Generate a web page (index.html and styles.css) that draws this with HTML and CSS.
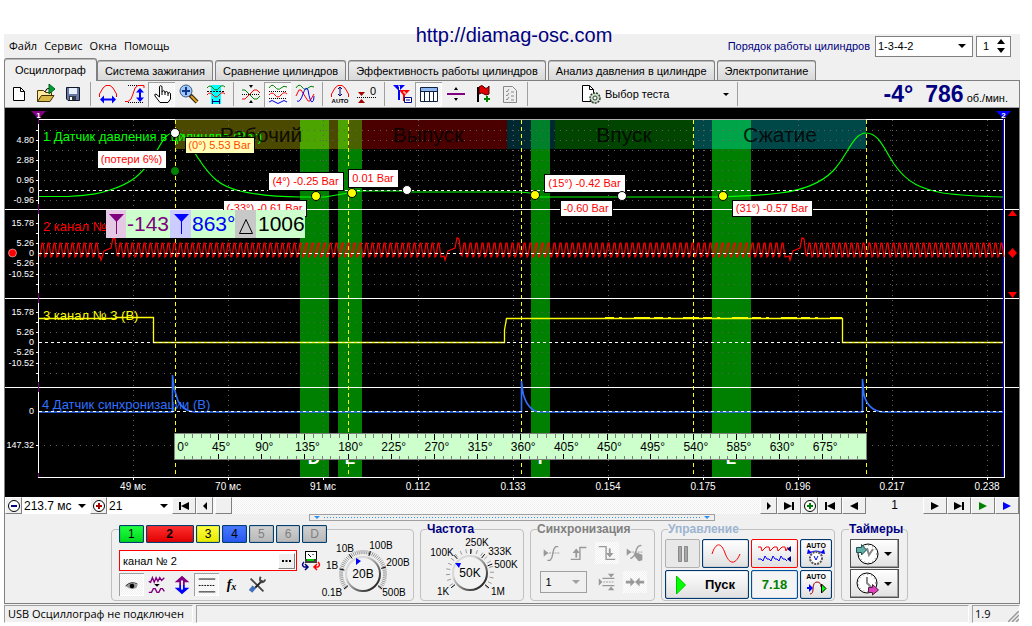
FILE: index.html
```html
<!DOCTYPE html>
<html lang="ru">
<head>
<meta charset="utf-8">
<title>Осциллограф</title>
<link rel="stylesheet" href="styles.css">
</head>
<body>
<a class="site" href="#">http://diamag-osc.com</a>
<div class="app">
  <header class="menubar">
    <nav class="menu"><a href="#">Файл</a><a href="#">Сервис</a><a href="#">Окна</a><a href="#">Помощь</a></nav>
    <label class="order" for="order">Порядок работы цилиндров</label>
    <span class="drop drop-order"><select id="order"><option>1-3-4-2</option></select></span>
    <span class="spin"><input type="number" value="1" aria-label="Цилиндр"><svg width="8" height="14" viewBox="0 0 8 14"><path d="M0 5L4 0L8 5zM0 9L4 14L8 9z"/></svg></span>
  </header>
  <nav class="tabs">
    <button class="tab active">Осциллограф</button><button class="tab">Система зажигания</button><button class="tab">Сравнение цилиндров</button><button class="tab">Эффективность работы цилиндров</button><button class="tab">Анализ давления в цилиндре</button><button class="tab">Электропитание</button>
  </nav>
  <main class="frame">
    <div class="toolbar">
      <button class="tool" aria-label="Новый"><svg viewBox="0 0 24 24"><path d="M6.5 5.5H13.500L17.500 9.500V18.500H6.500z" fill="#fff" stroke="#000"/><path d="M13.500 5.500V9.500H17.500" fill="none" stroke="#000"/></svg></button>
      <button class="tool" aria-label="Открыть"><svg viewBox="0 0 24 24"><path d="M3.500 19.500V8.500H9.500L11.500 10.500H17.500V13" fill="#ffe9a0" stroke="#503800"/><path d="M3.500 19.500L7.500 13.500H20L16 19.500z" fill="#d8b848" stroke="#403000"/><path d="M11 10Q12 6 16 6" fill="none" stroke="#000"/><path d="M15 2L21 7L15 12z" fill="#00a030" stroke="#006020"/></svg></button>
      <button class="tool" aria-label="Сохранить"><svg viewBox="0 0 24 24"><path d="M5.500 5.500H18.500V18.500H7L5.500 17z" fill="#6878a0" stroke="#101828"/><rect x="8" y="6" width="8" height="6" fill="#e8f0ff"/><rect x="8" y="14" width="7" height="4" fill="#303848"/><rect x="9" y="15" width="2" height="3" fill="#fff"/></svg></button>
      <i class="sep"></i>
      <button class="tool" aria-label="Период"><svg viewBox="0 0 24 24"><path d="M3.500 15V12L7 6L10 3.500H14L17 6L20.500 12V15" fill="none" stroke="#f00"/><path d="M4 17.500L8 13.500V16.500H16V13.500L20 17.500L16 21.500V18.500H8V21.500z" fill="#00f"/></svg></button>
      <button class="tool" aria-label="Амплитуда"><svg viewBox="0 0 24 24"><path d="M5 3.500H14M5 20.500H20" stroke="#000" stroke-dasharray="1 1"/><path d="M2 19.500H5L8 17L10 12L12 6L15 3.500H21V6" fill="none" stroke="#f00"/><path d="M17 6L21 10.500H18V15.500H21L17 20L13 15.500H16V10.500H13z" fill="#00f"/></svg></button>
      <button class="tool on" aria-label="Рука"><svg viewBox="0 0 24 24"><path d="M9.500 15L6 12Q4 12 5 14L10 20.500H18L20.500 17V11.500Q19 9.500 18 11.500V10.500Q16.500 8.500 15 10.500V9.500Q13.500 8 12 9.500V4.500Q10.500 3 9.500 4.500z" fill="#fff" stroke="#000"/><path d="M12 9V13M15 10V13M18 11V14" stroke="#000"/></svg></button>
      <button class="tool" aria-label="Лупа"><svg viewBox="0 0 24 24"><path d="M13 13L20 20" stroke="#302000" stroke-width="4"/><path d="M14 14L20 20" stroke="#e0a020" stroke-width="2"/><circle cx="9" cy="9" r="6" fill="#a0c8f8" stroke="#405880" stroke-width="1"/><path d="M9 5V13M5 9H13" stroke="#103890" stroke-width="2"/></svg></button>
      <button class="tool" aria-label="Измерение"><svg viewBox="0 0 24 24"><rect x="7" y="3" width="10" height="19" fill="#0ff"/><path d="M3 6Q6 2 9 6T15 6T21 5" fill="none" stroke="#008000"/><path d="M3 13Q6 9 9 13T15 13T21 12" fill="none" stroke="#f00"/><path d="M3 9.500H21" stroke="#000" stroke-dasharray="2 1"/><path d="M8 19.500H16M8.500 17V22M15.500 17V22" stroke="#000080"/></svg></button>
      <i class="sep"></i>
      <button class="tool" aria-label="Совместить"><svg viewBox="0 0 24 24"><path d="M10 3H14L12 6zM10 21H14L12 18z"/><path d="M3 12.500H21" stroke="#000" stroke-dasharray="1 1"/><path d="M3 8H6L15 17H18L21 14" fill="none" stroke="#008000"/><path d="M3 17H6L15 8H18L21 11" fill="none" stroke="#f00"/></svg></button>
      <button class="tool on" aria-label="Разнести"><svg viewBox="0 0 24 24"><path d="M3 6Q6 1 9 5T15 6T21 5" fill="none" stroke="#008000"/><path d="M3 13Q6 9 9 13T15 13T21 12" fill="none" stroke="#f00"/><path d="M3 20Q6 17 9 20T15 20T21 20" fill="none" stroke="#00f"/><path d="M3 9.500H21M3 16.500H21" stroke="#000" stroke-dasharray="1 1"/></svg></button>
      <button class="tool" aria-label="Наложить"><svg viewBox="0 0 24 24"><path d="M3 6Q6 1 9 5T15 6T21 5" fill="none" stroke="#008000"/><path d="M3 14L6 8H8L15 19H17L21 12" fill="none" stroke="#f00"/><path d="M4 19Q7 21 10 12T15 8Q17 20 19 20T21 14" fill="none" stroke="#00f"/></svg></button>
      <i class="sep"></i>
      <button class="tool" aria-label="Авто"><svg viewBox="0 0 24 24"><path d="M3.500 15V12L7 6L10 3.500H14L17 6L20.500 12V15" fill="none" stroke="#f00"/><path d="M12 5V14M10 7L12 5L14 7M10 12L12 14L14 12" fill="none" stroke="#000080"/><text x="12" y="21" text-anchor="middle" font-size="6" font-weight="bold" fill="#000">AUTO</text></svg></button>
      <button class="tool" aria-label="Ноль"><svg viewBox="0 0 24 24"><path d="M2 15.500H21" stroke="#000" stroke-dasharray="1 1"/><path d="M3 10H10L6.500 14zM3 21H10L6.500 17z" fill="#a00000"/><text x="15" y="13" font-size="11" fill="#000">0</text></svg></button>
      <i class="sep"></i>
      <button class="tool" aria-label="Маркеры"><svg viewBox="0 0 24 24"><path d="M9 8H20L15 13V19H13V13z" fill="#f00"/><path d="M3 3H15L10 8V18H8V8z" fill="#00f"/><path d="M8 4H9.500V8M13 10H15V12" fill="none" stroke="#fff"/><path d="M14.500 15.500H21.500V20.500H14.500z" fill="#fff" stroke="#000080"/><path d="M16 18H20" stroke="#000080"/></svg></button>
      <button class="tool on pressed" aria-label="Таблица"><svg viewBox="0 0 24 24"><path d="M3.500 5.500H20.500V19.500H3.500z" fill="#fff" stroke="#102040"/><rect x="4" y="6" width="16" height="3" fill="#90b8f0"/><path d="M3 9.500H21M7.500 9V20M12.500 9V20M16.500 9V20" stroke="#102040"/></svg></button>
      <button class="tool" aria-label="Разделитель"><svg viewBox="0 0 24 24"><path d="M10 8L12 5L14 8zM10 16H14L12 19z"/><path d="M3 12H21" stroke="#800080" stroke-width="2"/></svg></button>
      <button class="tool" aria-label="Флаг"><svg viewBox="0 0 24 24"><path d="M7 5V20" stroke="#000" stroke-width="2"/><path d="M8 5Q11 2 13 5T18 4V12Q15 14 13 12T8 12z" fill="#e00000" stroke="#400"/><path d="M16 14V20M13 17H19" stroke="#008000" stroke-width="2"/></svg></button>
      <button class="tool" aria-label="Список"><svg viewBox="0 0 24 24"><path d="M5.500 4.500H14.500L18.500 8.500V20.500H5.500z" fill="#eee" stroke="#888"/><path d="M8 9L9 10L11 7M8 13L9 14L11 11M8 17L9 18L11 15M13 10H16M13 14H16M13 18H16" fill="none" stroke="#888"/></svg></button>
      <i class="sep"></i>
      <button class="test"><svg width="20" height="20" viewBox="0 0 20 20"><path d="M1.500 17.500V1.500H8.500L12.500 5.500V17.500z" fill="#fff" stroke="#000"/><path d="M8.500 1.500V5.500H12.500" fill="none" stroke="#000"/><circle cx="14" cy="14" r="5" fill="#c8dcc8" stroke="#304030" stroke-width="1.500" stroke-dasharray="2 1"/><circle cx="14" cy="14" r="2" fill="#fff" stroke="#304030"/></svg><span>Выбор теста</span><i class="caret"></i></button>
      <i class="sep"></i>
      <output class="rpm"><b>-4°</b><b>786</b><span>об./мин.</span></output>
    </div>
    <svg class="plot" id="plot" viewBox="5 108 1014 389" role="img" aria-label="Осциллограмма"></svg>
    <div class="navrow">
      <button class="nb n16" aria-label="Меньше"><svg width="14" height="14" viewBox="0 0 14 14"><circle cx="7" cy="7" r="5.500" fill="#fff" stroke="#000"/><path d="M4 7H10" stroke="#000080" stroke-width="2"/></svg></button>
      <span class="drop bare d-time"><select aria-label="Время"><option>213.7 мс</option></select></span>
      <button class="nb n16" aria-label="Больше"><svg width="14" height="14" viewBox="0 0 14 14"><circle cx="7" cy="7" r="5.500" fill="#fff" stroke="#000"/><path d="M4 7H10M7 4V10" stroke="#a00000" stroke-width="2"/></svg></button>
      <span class="drop bare d-num"><select aria-label="Кадры"><option>21</option></select></span>
      <button class="nb" aria-label="В начало"><svg width="12" height="8" viewBox="0 0 12 8"><path d="M1 0H3V8H1zM11 0V8L3 4z"/></svg></button>
      <button class="nb n16" aria-label="Влево"><svg width="6" height="8" viewBox="0 0 6 8"><path d="M5 0V8L1 4z"/></svg></button>
      <div class="track"><i class="nb n16"></i></div>
      <button class="nb n16" aria-label="Вправо"><svg width="6" height="8" viewBox="0 0 6 8"><path d="M1 0V8L5 4z"/></svg></button>
      <button class="nb" aria-label="В конец"><svg width="12" height="8" viewBox="0 0 12 8"><path d="M9 0H11V8H9zM1 0V8L9 4z"/></svg></button>
      <button class="nb n16" aria-label="Добавить"><svg width="14" height="14" viewBox="0 0 14 14"><circle cx="7" cy="7" r="5.500" fill="#fff" stroke="#000"/><path d="M4 7H10M7 4V10" stroke="#008000" stroke-width="2"/></svg></button>
      <button class="nb" aria-label="Первый"><svg width="12" height="8" viewBox="0 0 12 8"><path d="M1 0H3V8H1zM11 0V8L3 4z"/></svg></button>
      <button class="nb" aria-label="Назад"><svg width="8" height="8" viewBox="0 0 8 8"><path d="M8 0V8L0 4z"/></svg></button>
      <span class="frameno">1</span>
      <button class="nb" aria-label="Вперёд"><svg width="8" height="8" viewBox="0 0 8 8"><path d="M0 0V8L8 4z"/></svg></button>
      <button class="nb" aria-label="Последний"><svg width="12" height="8" viewBox="0 0 12 8"><path d="M9 0H11V8H9zM1 0V8L9 4z"/></svg></button>
      <button class="nb" aria-label="Пуск"><svg width="8" height="8" viewBox="0 0 8 8"><path d="M0 0V8L8 4z" fill="#008000"/></svg></button>
      <button class="nb" aria-label="Воспроизвести"><svg width="8" height="8" viewBox="0 0 8 8"><path d="M0 0V8L8 4z" fill="#00f"/></svg></button>
    </div>
    <div class="splitter"><i></i><b></b><i></i></div>
    <div class="panel">
      <fieldset class="group g-chan">
        <div class="chan">
          <div class="chrow"><button class="ch c1">1</button><button class="ch c2">2</button><button class="ch c3">3</button><button class="ch c4">4</button><button class="ch">5</button><button class="ch">6</button><button class="ch">D</button></div>
          <div class="namerow">
            <div class="namebox"><input type="text" value="канал № 2" aria-label="Имя канала"><button aria-label="Ещё"><svg width="9" height="2" viewBox="0 0 9 2"><path d="M0 0H2V2H0zM3.500 0H5.500V2H3.500zM7 0H9V2H7z"/></svg></button></div>
            <svg width="20" height="20" viewBox="0 0 20 20"><rect x="4.500" y=".500" width="11" height="9" fill="#fff" stroke="#000"/><rect x="4" y="8" width="12" height="4" fill="#404040"/><path d="M6 9H13" stroke="#0c0" stroke-width="2"/><path d="M7 3L10 6M12 3V4" stroke="#000"/><path d="M3 11Q0 14 3 16H6M4 13L7 16L4 19" fill="none" stroke="#000080" stroke-width="1.500"/><path d="M17 11Q20 14 17 16H14M16 13L13 16L16 19" fill="none" stroke="#f00" stroke-width="1.500"/></svg>
          </div>
          <div class="iconrow">
            <button class="tool on" aria-label="Показать"><svg viewBox="0 0 24 24"><path d="M5 13Q11 7 18 12L17 15Q11 18 6 14z" fill="#999"/><path d="M5 13Q11 7 18 11" fill="none" stroke="#222"/><circle cx="12" cy="13" r="2.500"/></svg></button>
            <button class="tool" aria-label="Фильтр"><svg viewBox="0 0 24 24"><path d="M3 8L5 9L7 4L9 9L11 4L13 8L15 4L17 7L20 4M3 20H6L8 16H10L12 20H14L16 16H18L20 19" fill="none" stroke="#800080" stroke-width="1.500"/><path d="M9 11H15L12 14z"/></svg></button>
            <button class="tool" aria-label="Сдвиг"><svg viewBox="0 0 24 24"><path d="M12 2L20 9H15V12H9V9H4z" fill="#800080"/><path d="M12 22L20 15H15V12H9V15H4z" fill="#00f"/><path d="M12 7V17" stroke="#fff" stroke-width="2"/></svg></button>
            <button class="tool on" aria-label="Уровни"><svg viewBox="0 0 24 24"><path d="M3 5.500H21M3 19.500H21" stroke="#000"/><path d="M3 12.500H21" stroke="#000" stroke-dasharray="2 1"/></svg></button>
            <button class="tool fx" aria-label="Функция"><em>f</em><i>x</i></button>
            <button class="tool" aria-label="Настройка"><svg viewBox="0 0 24 24"><path d="M5 5L19 19" stroke="#444" stroke-width="2"/><path d="M18 7L10 15" stroke="#222" stroke-width="2"/><path d="M9 14L5 19" stroke="#4070c0" stroke-width="5"/><path d="M16 3Q14 7 17 9Q20 9 21 6" fill="none" stroke="#444" stroke-width="2"/></svg></button>
          </div>
        </div>
        <svg class="knob" id="knobV" viewBox="324 536 90 62" role="img" aria-label="Чувствительность"></svg>
      </fieldset>
      <fieldset class="group g-freq"><legend>Частота</legend>
        <svg class="knob" id="knobF" viewBox="426 536 92 62" role="img" aria-label="Частота"></svg>
      </fieldset>
      <fieldset class="group g-sync"><legend>Синхронизация</legend>
        <div class="syncgrid">
          <button class="tool" disabled aria-label="Уровень"><svg viewBox="0 0 24 24"><path d="M4 12H21" stroke="#999" stroke-dasharray="2 1"/><path d="M4 8L9 12L4 16z" fill="#999"/><path d="M8 20H11L13 17L15 8L17 5H20" fill="none" stroke="#999" stroke-width="1.500"/></svg></button>
          <button class="tool" disabled aria-label="Фронт"><svg viewBox="0 0 24 24"><path d="M3 19H13V6H20" fill="none" stroke="#999" stroke-width="1.500"/><path d="M9 17V10" stroke="#999" stroke-width="2"/><path d="M5 12H13L9 7z" fill="#999"/></svg></button>
          <button class="tool on" disabled aria-label="Спад"><svg viewBox="0 0 24 24"><path d="M3 5H11V19H21" fill="none" stroke="#999" stroke-width="1.500"/><path d="M15 7V14" stroke="#999" stroke-width="2"/><path d="M11 12H19L15 17z" fill="#999"/></svg></button>
          <button class="tool" disabled aria-label="Ручной"><svg viewBox="0 0 24 24"><path d="M3 11H21" stroke="#999" stroke-dasharray="2 1"/><path d="M3 7L8 11L3 15zM12 11L20 14V20L16 21L11 15z" fill="#999"/><path d="M7 18Q11 17 13 10T19 4" fill="none" stroke="#999" stroke-width="1.500"/></svg></button>
          <span class="drop d-sync"><select disabled aria-label="Канал синхронизации"><option>1</option></select></span>
          <button class="tool" disabled aria-label="Гистерезис"><svg viewBox="0 0 24 24"><path d="M3 8L7 12L3 16zM13 3H20L16.500 7zM13 21H20L16.500 17z" fill="#999"/><path d="M7 8H20M7 16H20" fill="none" stroke="#999" stroke-width="1.500"/><path d="M8 12H20" stroke="#999" stroke-dasharray="2 1"/></svg></button>
          <button class="tool on" disabled aria-label="Сжать"><svg viewBox="0 0 24 24"><path d="M2 12H9M15 12H22" stroke="#999" stroke-width="3"/><path d="M7 7L12 12L7 17zM17 7L12 12L17 17z" fill="#999"/></svg></button>
        </div>
      </fieldset>
      <fieldset class="group g-ctl"><legend class="pale">Управление</legend>
        <div class="ctlgrid">
          <button class="big off" aria-label="Пауза"><svg width="12" height="16" viewBox="0 0 12 16"><path d="M1.500 .500H4.500V15.500H1.500zM7.500 .500H10.500V15.500H7.500z" fill="#a8a8a8" stroke="#888"/></svg></button>
          <button class="big" aria-label="Синус"><svg width="30" height="20" viewBox="0 0 30 20"><path d="M1 10C5 -2 10 -2 14 9S24 22 29 10" fill="none" stroke="#f00"/></svg></button>
          <button class="big redb" aria-label="Запись"><svg width="34" height="18" viewBox="0 0 34 18"><path d="M0 2H3L4 6L6 4L8 2H11L12 6L14 4L16 2H19L20 6L22 4L24 2H27L28 6L30 2" fill="none" stroke="#f00"/><path d="M0 14H3L5 16L7 11L9 14H11L13 16L15 11L17 14H19L21 16L23 11L25 14H27L29 16" fill="none" stroke="#00f"/><path d="M33 1V7L29 4zM33 11V17L29 14z" fill="#000080"/></svg></button>
          <button class="big" aria-label="Авто вольт"><svg width="28" height="26" viewBox="0 0 28 26"><text x="14" y="7" text-anchor="middle" font-size="7" font-weight="bold">AUTO</text><path d="M7 12Q14 8 21 12" fill="none" stroke="#00f"/><path d="M5 13L6 8L10 12zM23 13L22 8L18 12z" fill="#00f"/><circle cx="14" cy="17" r="6" fill="#fff" stroke="#555" stroke-width="2" stroke-dasharray="2 1"/><path d="M12 15L14 19L16 15" fill="none" stroke="#00f"/></svg></button>
          <button class="big start"><svg width="10" height="18" viewBox="0 0 10 18"><path d="M.500 0L9.500 9L.500 18z" fill="#0f0" stroke="#00c000"/></svg><b>Пуск</b></button>
          <button class="big blueb">7.18</button>
          <button class="big" aria-label="Авто пуск"><svg width="28" height="26" viewBox="0 0 28 26"><text x="14" y="7" text-anchor="middle" font-size="7" font-weight="bold">AUTO</text><path d="M8 22Q11 22 11 17Q11 10 15 10T19 15" fill="none" stroke="#a00000"/><path d="M5 16H8" stroke="#00f" stroke-width="2"/><path d="M7 12L11 16L7 20z" fill="#00f"/><path d="M19.500 12L24 16.500L19.500 21z" fill="#0f0" stroke="#000"/></svg></button>
        </div>
      </fieldset>
      <fieldset class="group g-time"><legend>Таймеры</legend>
        <div class="timers">
          <button class="big grayb" aria-label="Таймер начала"><svg width="26" height="24" viewBox="0 0 26 24"><circle cx="14" cy="12" r="10" fill="#fff" stroke="#000"/><circle cx="14" cy="12" r="8.500" fill="none" stroke="#888" stroke-dasharray="1 3"/><path d="M13 6L15 13L19 7" fill="none" stroke="#888" stroke-width="2"/><path d="M2.500 5.500H7.500V2.500L12.500 8L7.500 13V10.500H2.500z" fill="#60b0a8" stroke="#205050"/></svg><i class="caret"></i></button>
          <button class="big grayb" aria-label="Таймер конца"><svg width="26" height="24" viewBox="0 0 26 24"><circle cx="13" cy="11" r="10" fill="#fff" stroke="#000"/><circle cx="13" cy="11" r="8.500" fill="none" stroke="#888" stroke-dasharray="1 3"/><path d="M13 5V11L18 16" fill="none" stroke="#888" stroke-width="2"/><path d="M14.500 15.500H18.500V12.500L24.500 18L18.500 23V20.500H14.500z" fill="#e040c0" stroke="#502040"/></svg><i class="caret"></i></button>
        </div>
      </fieldset>
    </div>
  </main>
  <footer class="status">
    <span class="cell first">USB Осциллограф не подключен</span><span class="cell grow"></span><span class="cell ver">1.9<svg width="11" height="11" viewBox="0 0 11 11"><path d="M0 11L11 0M4 11L11 4M8 11L11 8" stroke="#999" stroke-width="1.500"/></svg></span>
  </footer>
</div>
<script src="plot.js"></script>
</body>
</html>
```
FILE: styles.css
```css
* { box-sizing: border-box; }
body { margin: 0; background: #fff; font: 11px/14px "Liberation Sans", Arial, sans-serif; color: #000; }
button, input, select { font: inherit; color: inherit; margin: 0; padding: 0; border-radius: 0; }
button { border: 0; background: none; }
a { color: inherit; text-decoration: none; }
.site { position: absolute; z-index: 2; top: 23px; left: 0; right: 4px; text-align: center; font-size: 20px; line-height: 24px; color: #000080; }
.app { margin: 34px 12px 0 4px; background: #f0f0f0; }

.menubar { display: flex; align-items: center; height: 24px; padding-right: 9px; }
.menu { display: flex; gap: 7px; padding-left: 5px; flex: 1; font-family: "Open Sans", "Noto Sans", sans-serif; }
.order { color: #000080; margin-right: 5px; }
.drop { display: grid; align-items: center; background: #fff; }
.drop select, .drop::after { grid-area: 1 / 1; }
.drop::after { content: ""; justify-self: end; margin-right: 6px; border: 4px solid transparent; border-top-color: #000; border-bottom: 0; pointer-events: none; }
.drop select { appearance: none; border: 0; background: none; width: 100%; height: 100%; padding-left: 2px; outline: 0; }
.drop-order { width: 98px; height: 21px; border: 1px solid #808080; margin-right: 3px; }
.spin { display: flex; align-items: center; width: 35px; height: 21px; border: 1px solid #808080; background: #fff; }
.spin input { appearance: textfield; width: 20px; border: 0; padding-left: 6px; background: none; }
.spin input::-webkit-inner-spin-button { appearance: none; margin: 0; }

.tabs { display: flex; align-items: flex-end; gap: 2px; height: 22px; }
.tab { height: 20px; padding: 0 7px; border: 1px solid #808080; border-bottom: 0; border-radius: 3px 3px 0 0; background: linear-gradient(#f0f0f0, #d8d8d8); box-shadow: inset 0 1px #b8b8b8; white-space: nowrap; }
.tab.active { height: 23px; padding: 0 10px; margin: 0 -2px -1px 0; background: #f0f0f0; position: relative; }

.frame { display: block; border: 1px solid #808080; }
.toolbar { display: flex; align-items: center; height: 27px; border-bottom: 1px solid #a0a0a0; }
.tool { display: flex; align-items: center; justify-content: center; width: 27px; height: 25px; flex: none; }
.tool svg { width: 24px; height: 24px; }
.tool text, .big text { font-family: "Liberation Sans", Arial, sans-serif; }
.on, .track { background: conic-gradient(#fff 25%, #f0f0f0 0 50%, #fff 0 75%, #f0f0f0 0) 0 0 / 2px 2px; }
.on { box-shadow: inset 1px 1px #a0a0a0, inset -1px -1px #fff; }
.sep { width: 8px; height: 24px; flex: none; background: linear-gradient(#a0a0a0, #a0a0a0) center / 1px 100% no-repeat; }
.test { display: flex; align-items: center; gap: 4px; flex: 0 1 202px; padding: 0 4px 0 50px; }
.caret { margin-left: auto; border: 4px solid transparent; border-top-color: #000; border-bottom: 0; }
.test .caret { border-width: 3px 3px 0; }
.rpm { display: flex; align-items: baseline; margin-left: auto; padding-right: 11px; color: #000080; }
.rpm b { font-size: 23px; line-height: 24px; margin-right: 12px; }
.rpm b + b { margin-right: 3px; }
.rpm span { color: #000; }

.plot { display: block; width: 100%; background: #000; font-family: "Liberation Sans", Arial, sans-serif; }
.crisp { shape-rendering: crispEdges; }

.navrow { display: flex; height: 17px; }
.nb { display: flex; align-items: center; justify-content: center; flex: none; width: 24px; height: 17px; background: #f0f0f0; border: 1px solid #fff; border-right-color: #808080; border-bottom-color: #808080; }
.n16 { width: 17px; }
.bare { height: 17px; font-size: 12px; }
.bare::after { margin-right: 4px; }
.d-time { width: 68px; }
.d-num { width: 65px; }
.track { flex: 1; padding-left: 2px; }
.frameno { width: 57px; text-align: center; line-height: 17px; font-size: 12px; }

.splitter { display: flex; align-items: center; gap: 4px; width: 40%; height: 7px; margin: 0 auto; padding: 0 4px; border: 1px solid #a0a0a0; }
.splitter i { border: 3px solid transparent; border-top-color: #3090f0; border-bottom: 0; }
.splitter b { flex: 1; height: 1px; background: repeating-linear-gradient(90deg, #3090f0 0 1px, transparent 1px 3px); }

.panel { display: flex; justify-content: center; align-items: flex-end; gap: 6px; padding: 2px 5px 2px 0; }
.group { margin: 0; padding: 0 3px; border: 1px solid #c0c0c0; border-radius: 4px; min-width: 0; height: 78px; }
.group legend { margin-left: 3px; padding: 0; font-size: 12px; line-height: 12px; font-weight: bold; color: #000080; white-space: nowrap; }
.group legend.pale { color: #9cb4d0; }
.g-chan { display: flex; width: 303px; height: 72px; padding: 0 2px 0 7px; }
.chan { flex: 1; min-width: 0; }
.chrow { display: flex; gap: 2px; width: 208px; margin-top: -5px; background: #f0f0f0; }
.ch { flex: 1; height: 18px; border: 1px solid #004070; border-radius: 1px; background: linear-gradient(#d0d0d0, #b8b8b8); color: #808080; font-size: 12px; box-shadow: inset 0 0 1px #004070; }
.c1, .c2, .c3, .c4 { color: #000; }
.c1 { background: linear-gradient(#20ff40, #00d820); }
.c2 { flex: 0 0 48px; background: linear-gradient(#ff3030, #e00000); font-weight: bold; }
.c3 { background: linear-gradient(#ffff40, #e8e800); }
.c4 { background: linear-gradient(#4878ff, #2858f0); }
.namerow { display: flex; align-items: center; gap: 4px; margin-top: 7px; }
.namebox { display: flex; align-items: center; width: 178px; height: 21px; padding: 1px; border: 1px solid #f00; background: #fff; }
.namebox input { flex: 1; min-width: 0; border: 0; padding-left: 2px; background: none; }
.namebox button { display: flex; align-items: center; justify-content: center; width: 17px; height: 16px; background: #f0f0f0; border: 1px solid #fff; border-right-color: #808080; border-bottom-color: #808080; }
.iconrow { display: flex; margin-top: 2px; }
.iconrow .tool { width: 25px; height: 23px; }
.iconrow svg { width: 22px; height: 22px; }
.fx em { font: italic bold 14px/20px "Liberation Serif", serif; }
.fx i { font: italic bold 10px/20px "Liberation Serif", serif; padding-top: 4px; }
.knob { display: block; font-family: "Liberation Sans", Arial, sans-serif; }
.g-chan .knob { flex: none; width: 90px; height: 62px; margin-top: 6px; }
.g-freq { width: 104px; }
.g-freq .knob { width: 92px; height: 62px; margin: 0 auto; }

.g-sync { width: 125px; }
.g-sync legend { color: #808080; }
.syncgrid { display: grid; grid-template-columns: repeat(4, 28px); row-gap: 7px; justify-content: center; padding-top: 7px; }
.syncgrid .tool { width: 24px; height: 22px; justify-self: center; }
.syncgrid .tool svg { width: 22px; height: 22px; }
.g-sync .on { box-shadow: none; }
.d-sync { grid-column: span 2; width: 47px; height: 22px; margin-left: 3px; border: 1px solid #a0a0a0; background: #f0f0f0; }
.d-sync select { padding-left: 5px; opacity: 1; }
.d-sync::after { border-top-color: #a0a0a0; }

.g-ctl { width: 174px; }
.ctlgrid { display: grid; grid-template-columns: 35px 47px 47px 32px; gap: 2px; padding-top: 4px; }
.big { display: flex; align-items: center; justify-content: center; height: 29px; border: 1px solid #003870; border-radius: 2px; background: linear-gradient(#fff, #e0e0e0); }
.ctlgrid .big { box-shadow: inset 0 0 1px #003870; }
.ctlgrid .off { border-color: #b0b0b0; background: #e8e8e8; box-shadow: none; }
.ctlgrid .redb { border-color: #f00; box-shadow: none; }
.ctlgrid .blueb { border-color: #0050a0; background: #f4f4f4; color: #008000; font-size: 13px; font-weight: bold; }
.start { grid-column: span 2; justify-content: flex-start; padding-left: 10px; gap: 19px; font-size: 13px; }
.g-time { width: 67px; }
.g-time legend { margin-left: 4px; }
.timers { display: grid; gap: 1px; padding: 4px 3px 0 5px; }
.grayb { width: 49px; justify-content: flex-start; padding: 0 6px 0 3px; border-color: #505050; border-radius: 0; box-shadow: inset -1px -1px #a0a0a0; }

.status { display: flex; gap: 3px; height: 19px; padding-top: 1px; font: 11px/16px "Open Sans", "Noto Sans", sans-serif; }
.cell { border: 1px solid #a0a0a0; border-right-color: #fff; border-bottom-color: #fff; padding-left: 3px; white-space: nowrap; }
.first { width: 189px; }
.grow { flex: 1; }
.ver { display: flex; justify-content: space-between; align-items: flex-end; width: 48px; padding-left: 2px; }
```
FILE: plot.js
```js
const out = [];
const line = (x1, y1, x2, y2, color, dash = '', w = 1) =>
  out.push(`<line class="crisp" x1="${x1}" y1="${y1}" x2="${x2}" y2="${y2}" stroke="${color}" stroke-width="${w}" stroke-dasharray="${dash}"/>`);
const rect = (x, y, w, h, fill, extra = '') =>
  out.push(`<rect class="crisp" x="${x}" y="${y}" width="${w}" height="${h}" fill="${fill}" ${extra}/>`);
const text = (x, y, s, color, size, anchor = 'start', extra = '') =>
  out.push(`<text x="${x}" y="${y}" fill="${color}" font-size="${size}" text-anchor="${anchor}" ${extra}>${s}</text>`);
const path = (d, color, w = 1, fill = 'none') =>
  out.push(`<path d="${d}" stroke="${color}" stroke-width="${w}" fill="${fill}"/>`);

/* Valve bands and stroke phases */
[[300, 29], [338, 24], [531, 19], [712, 39]].forEach(([x, w]) => rect(x, 119, w, 358, '#008000'));
[[175, 173, '#4b4800'], [300, 29, '#4ba400'], [338, 10, '#4ba400'], [348, 14, '#4b6000'],
 [362, 145, '#4b0000'], [507, 48, '#002830'], [531, 19, '#00802a'], [555, 139, '#004400'],
 [694, 172, '#004848'], [712, 39, '#00a448']].forEach(([x, w, c]) => rect(x, 119, w, 30, c));

/* Grid */
const rows = [130, 140, 150, 160, 170, 180, 200, 223, 233, 243, 263, 274, 284, 312, 322, 332, 352, 363, 373, 445];
rows.forEach(y => { line(44, y + .5, 1002, y + .5, '#606060', '1 5'); line(36, y + .5, 39, y + .5, '#fff'); });
const cols = [133, 228, 323, 418, 513, 608, 703, 798, 892, 987];
cols.forEach(x => { line(x + .5, 120, x + .5, 477, '#606060', '1 4'); line(x + .5, 477, x + .5, 480, '#fff'); });

text(43, 141, '1 Датчик давления в цилиндре (Bar)', '#00ff00', 13);
text(43, 231, '2 канал №', '#ff0000', 13);
text(43, 320, '3 канал № 3 (В)', '#ffff00', 13);
text(42, 409, '4 Датчик синхронизации (В)', '#3070ff', 13);

[['Рабочий', 261], ['Выпуск', 428], ['Впуск', 624], ['Сжатие', 780]].forEach(([s, x]) => text(x, 142, s, '#000', 21, 'middle', 'opacity=".8"'));

/* Frame lines */
line(38, 119.5, 1004, 119.5, '#fff');
line(175, 119.5, 866, 119.5, '#b0b0b0');
[209.5, 298.5, 387.5].forEach(y => line(5, y, 1019, y, '#fff'));
line(38, 477.5, 1004, 477.5, '#fff');
line(38.5, 119, 38.5, 478, '#fff');
[[119, 124], [204, 214], [293, 303], [382, 392], [473, 477]].forEach(([a, b]) => line(38.5, a, 38.5, b, '#800080'));
line(1004.5, 119, 1004.5, 478, '#fff');
line(1003.5, 119, 1003.5, 477, '#0000ff');
[175.5, 348.5, 521.5, 693.5, 866.5].forEach(x => line(x, 120, x, 477, '#ffff00', '4 3'));

/* Channel 1: cylinder pressure */
path('M39 196.500H68C92 195 98 194 110 190C135 182 142 172 150 162C160 148 163 133 175 132.500C187 133 190 146 198 158C212 179 220 186 240 191C262 196 280 197 300 197H325L348 193L362 191H406L410 192H520L530 193L540 197H720C750 196 765 195 780 193C805 190 822 182 833 171C848 155 853 133 866 133C879 133 884 149 894 164C908 184 922 189 943 193Q965 196 1003 197', '#00ff00', 1.2);

/* Channel 2: periodic signal with reference marks */
const marks = [101, 445, 790];
let d = 'M39 255';
for (let x = 40; x < 1000;) {
  const m = marks.find(v => x >= v - 4 && x < v);
  if (m) {
    d += `L${m - 1} 256L${m} 260L${m + 3} 251L${m + 10} 248L${m + 12} 238L${m + 14} 239L${m + 16} 255`;
    x = m + 17;
  } else {
    d += `L${x} 256L${x + 2} 243L${x + 3} 243L${x + 5} 257`;
    x += 6;
  }
}
path(d, '#ff0000', 1.2);

/* Channel 3: level signal */
path('M39 318.500H116V317.500H153.500V342.500H504.500V330L506.500 318.500H842.500V342.500H1003', '#ffff00', 1.3);
line(605, 317.500, 842, 317.500, '#ffff00', '9 5 3 12 16 4');

/* Channel 4: sync pulses */
path('M39 412H172.500V375L174 388L178 401Q184 411 194 412H521.500V381L523 393Q527 409 538 412H862.500V379L864 395Q868 410 882 412H1003', '#3070ff', 1.6);
[190.500, 253.500, 342.500, 411.500].forEach(y => line(39, y, 1002, y, '#fff', '3 3'));

/* Axis labels */
[['4.80', 140], ['2.88', 160], ['0.96', 180], ['0', 190], ['-0.96', 200], ['15.78', 223], ['5.26', 243], ['0', 253],
 ['-5.26', 263], ['-10.52', 274], ['15.78', 312], ['5.26', 332], ['0', 342], ['-5.26', 352], ['-10.52', 363],
 ['0', 411], ['147.32', 445]].forEach(([s, y]) => text(34, y + 3, s, '#fff', 9, 'end'));
['49 мс', '70 мс', '91 мс', '0.112', '0.133', '0.154', '0.175', '0.196', '0.217', '0.238'].forEach((s, i) => text(cols[i], 490, s, '#fff', 10, 'middle'));

/* Value callouts */
const tag = (x, y, w, h, s, bg = '#fff', color = '#ff0000') => {
  rect(x, y, w, h, bg, 'stroke="#000"');
  text(x + w / 2, y + h / 2 + 4, s, color, 11, 'middle');
};
tag(97, 150, 69, 18, '(потери 6%)');
tag(185, 137, 69, 16, '(0°) 5.53 Bar', '#ffffb8', '#ff4800');
tag(268, 172, 75, 18, '(4°) -0.25 Bar');
tag(348, 169, 50, 18, '0.01 Bar');
tag(223, 200, 83, 16, '(-33°) -0.61 Bar');
tag(544, 174, 81, 18, '(15°) -0.42 Bar');
tag(560, 200, 52, 16, '-0.60 Bar');
tag(732, 200, 80, 16, '(31°) -0.57 Bar');
[[175, 133, '#fff'], [175, 171, '#008000'], [316, 196, '#ff0'], [352, 193, '#ff0'], [407, 190, '#fff'],
 [535, 195, '#ff0'], [622, 196, '#fff'], [723, 196, '#ff0']].forEach(([x, y, c]) => out.push(`<circle cx="${x}" cy="${y}" r="4.5" fill="${c}" stroke="#000"/>`));

/* Cursor readout */
rect(106, 210, 199, 28, '#ccffcc');
rect(106, 210, 20, 28, '#e4c8e4');
rect(170, 210, 21, 28, '#ccccff');
rect(235, 210, 21, 28, '#c8c8c8');
path('M109 214H124L116.500 222z', 'none', 0, '#800080');
path('M174 214H189L181.500 222z', 'none', 0, '#0000ff');
line(116.5, 214, 116.5, 234, '#800080');
line(181.5, 214, 181.5, 234, '#0000ff');
path('M239.500 233.500L246 219.500L252.500 233.500z', '#000');
text(127, 231, '-143', '#800080', 21);
text(192, 231, '863°', '#0000ff', 21);
text(258, 231, '1006', '#000', 21);

/* Crank angle ruler */
[['D', 314], ['L', 350], ['I', 540], ['L', 731]].forEach(([s, x]) => text(x, 464, s, '#fff', 17, 'middle', 'font-weight="bold"'));
rect(174, 433, 692, 26, '#ccffcc', 'stroke="#808080"');
for (let i = 1; i < 80; i++) {
  const x = Math.round(175 + i * 8.63) + .5, major = i % 5 === 0, h = major ? 6 : 4, c = major ? '#000' : '#808080';
  line(x, 434, x, 434 + h, c);
  line(x, 459 - (major ? 5 : 3), x, 459, c);
}
for (let i = 0; i < 16; i++) text(i ? 178 + i * 43.15 : 183, 451, i * 45 + '°', '#000', 12, 'middle');

/* Markers */
path('M31 111H46L38.500 119z', 'none', 0, '#800080');
path('M996 111H1011L1003.500 119z', 'none', 0, '#0000ff');
text(38.5, 118, '1', '#fff', 8, 'middle', 'font-weight="bold"');
text(1003.5, 118, '2', '#fff', 8, 'middle', 'font-weight="bold"');
out.push('<circle cx="12.500" cy="253" r="4" fill="#f00" stroke="#fff" stroke-width=".500"/>');
path('M1008 216H1017L1012.500 210zM1008 253L1012.500 248L1017 253L1012.500 258zM1008 292H1017L1012.500 298z', 'none', 0, '#ff0000');
document.getElementById('plot').innerHTML = out.join('');

/* Rotary knobs */
function knob(id, cx, cy, value, labels, step, hand) {
  let s = `<defs><linearGradient id="${id}g" x1="0" y1="0" x2="1" y2="1"><stop offset=".3" stop-color="#d8d8d8"/><stop offset="1" stop-color="#000"/></linearGradient></defs>`;
  const spoke = (a, r1, r2, c) => {
    const t = a * Math.PI / 180;
    return `<line x1="${cx + r1 * Math.cos(t)}" y1="${cy - r1 * Math.sin(t)}" x2="${cx + r2 * Math.cos(t)}" y2="${cy - r2 * Math.sin(t)}" stroke="${c}"/>`;
  };
  for (let a = -40; a <= 220; a += step) s += spoke(a, 20, 24, '#999');
  labels.forEach(([t, x, y, a]) => { s += spoke(a, 19, 24, '#000') + `<text x="${x}" y="${y + 4}" font-size="10" text-anchor="middle">${t}</text>`; });
  s += `<circle cx="${cx}" cy="${cy}" r="17" fill="#f2f2f2" stroke="url(#${id}g)" stroke-width="2"/>`;
  s += `<path d="${hand}" fill="#00f"/><text x="${cx}" y="${cy + 4}" font-size="12" text-anchor="middle">${value}</text>`;
  document.getElementById(id).innerHTML = s;
}
knob('knobV', 366, 574, '20В', [['0.1В', 335, 592, 218], ['1В', 335, 565, 168], ['10В', 348, 548, 125],
  ['100В', 384, 545, 72], ['200В', 401, 562, 17], ['500В', 397, 592, -38]], 5, 'M359 558L364 561L359 565z');
knob('knobF', 470, 574, '50K', [['1K', 443, 592, 218], ['100K', 442, 553, 132], ['250K', 477, 543, 88],
  ['333K', 500, 552, 52], ['500K', 506, 565, 22], ['1M', 498, 592, -38]], 14, 'M455 564H461L459 569z');
```
